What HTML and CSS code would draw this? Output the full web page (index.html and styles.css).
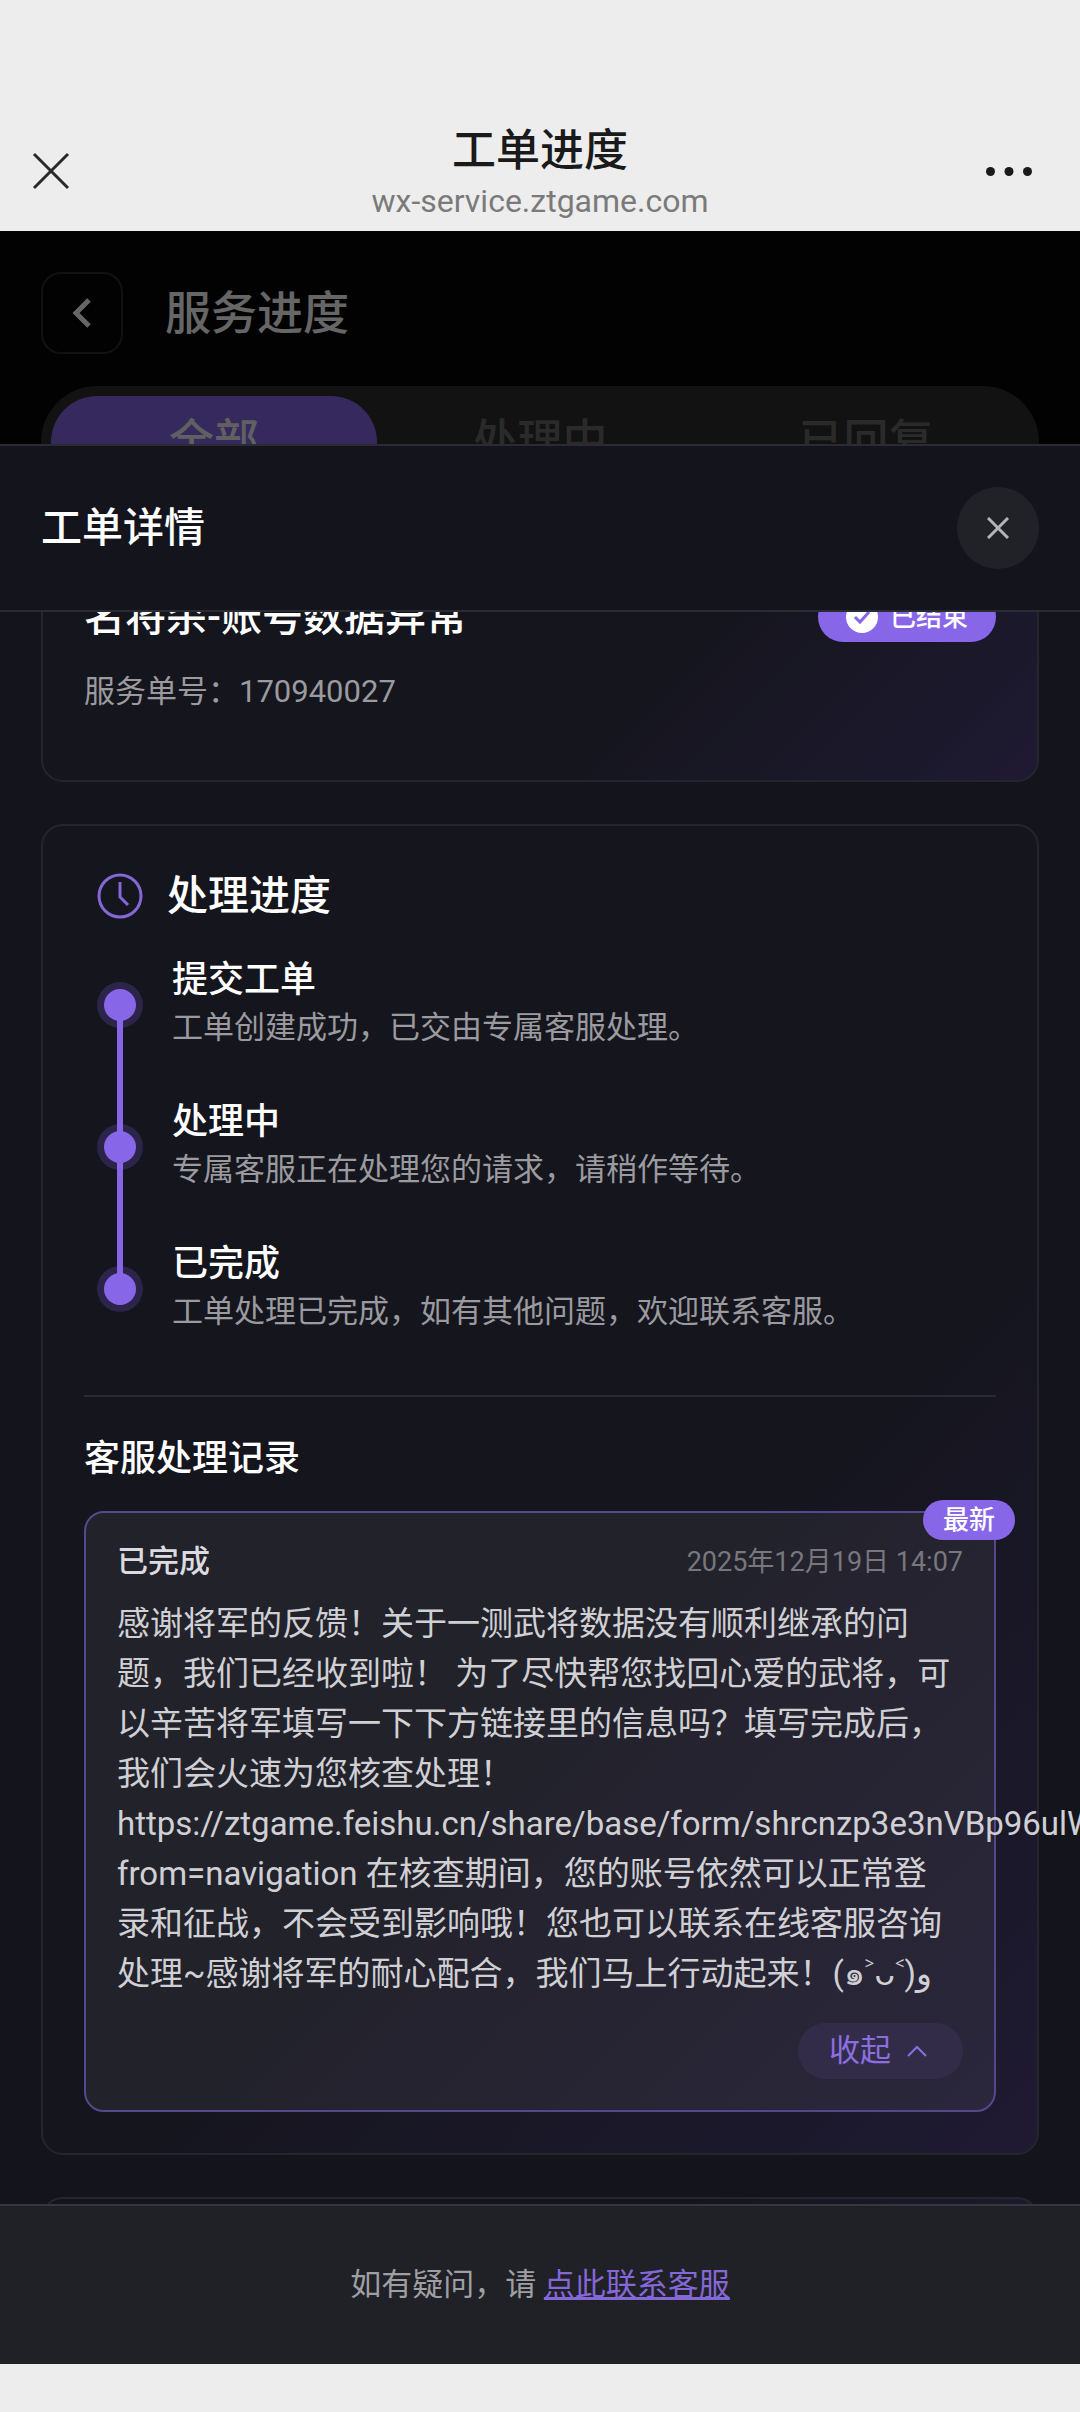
FILE: index.html
```html
<!DOCTYPE html>
<html lang="zh-CN">
<head>
    <meta charset="UTF-8">
    <meta name="viewport" content="width=device-width, initial-scale=1.0">
    <title>工单进度</title>
    <link rel="stylesheet" href="styles.css">
</head>
<body>
    <header class="nav-bar">
        <button class="nav-btn" type="button" aria-label="关闭">
            <svg width="38" height="38" viewBox="0 0 38 38"><path d="M2 2L36 36M36 2L2 36"/></svg>
        </button>
        <div class="nav-title">
            <h1>工单进度</h1>
            <p>wx-service.ztgame.com</p>
        </div>
        <button class="nav-btn nav-more" type="button" aria-label="更多">
            <svg width="46" height="9" viewBox="0 0 46 9"><circle cx="4.5" cy="4.5" r="4.5"/><circle cx="23" cy="4.5" r="4.5"/><circle cx="41.5" cy="4.5" r="4.5"/></svg>
        </button>
    </header>

    <main class="stage">
        <div class="page">
            <div class="page-head">
                <button class="back-btn" type="button" aria-label="返回">
                    <svg width="20" height="32" viewBox="0 0 20 32"><path d="M17 3L4 16L17 29"/></svg>
                </button>
                <h2>服务进度</h2>
            </div>
            <div class="tabs">
                <button class="tab active" type="button">全部</button>
                <button class="tab" type="button">处理中</button>
                <button class="tab" type="button">已回复</button>
            </div>
        </div>
        <div class="mask"></div>

        <section class="sheet">
            <div class="sheet-head">
                <h2>工单详情</h2>
                <button class="close-btn" type="button" aria-label="关闭详情">
                    <svg width="22" height="22" viewBox="0 0 22 22"><path d="M1 1L21 21M21 1L1 21"/></svg>
                </button>
            </div>

            <div class="sheet-body">
                <div class="sheet-list">
                    <div class="card">
                        <div class="ticket-head">
                            <h3>名将杀-账号数据异常</h3>
                            <span class="status">
                                <svg width="32" height="32" viewBox="0 0 32 32"><circle cx="16" cy="16" r="16"/><path d="M9 16L14 21L23 11"/></svg>
                                已结束
                            </span>
                        </div>
                        <p class="ticket-no">服务单号：170940027</p>
                    </div>

                    <div class="card">
                        <div class="progress-head">
                            <svg width="46" height="46" viewBox="0 0 46 46"><circle cx="23" cy="23" r="21"/><path d="M23 9V24L31 32"/></svg>
                            <h3>处理进度</h3>
                        </div>
                        <ol class="steps">
                            <li class="step">
                                <h4>提交工单</h4>
                                <p>工单创建成功，已交由专属客服处理。</p>
                            </li>
                            <li class="step">
                                <h4>处理中</h4>
                                <p>专属客服正在处理您的请求，请稍作等待。</p>
                            </li>
                            <li class="step">
                                <h4>已完成</h4>
                                <p>工单处理已完成，如有其他问题，欢迎联系客服。</p>
                            </li>
                        </ol>

                        <div class="records">
                            <h4>客服处理记录</h4>
                            <div class="record">
                                <span class="new-tag">最新</span>
                                <div class="record-head">
                                    <span class="record-status">已完成</span>
                                    <time>2025年12月19日 14:07</time>
                                </div>
                                <p class="record-text">感谢将军的反馈！关于一测武将数据没有顺利继承的问题，我们已经收到啦！ 为了尽快帮您找回心爱的武将，可以辛苦将军填写一下下方链接里的信息吗？填写完成后，我们会火速为您核查处理！https://ztgame.feishu.cn/share/base/form/shrcnzp3e3nVBp96ulW?from=navigation 在核查期间，您的账号依然可以正常登录和征战，不会受到影响哦！您也可以联系在线客服咨询处理~感谢将军的耐心配合，我们马上行动起来！(๑˃ᴗ˂)ﻭ</p>
                                <button class="fold-btn" type="button">
                                    收起
                                    <svg width="20" height="12" viewBox="0 0 20 12"><path d="M1 11L10 2L19 11"/></svg>
                                </button>
                            </div>
                        </div>
                    </div>

                    <div class="card"></div>
                </div>
            </div>

            <footer class="sheet-foot">如有疑问，请 <a href="#">点此联系客服</a></footer>
        </section>
    </main>
</body>
</html>
```
FILE: styles.css
```css
* {
    margin: 0;
    padding: 0;
    box-sizing: border-box;
}

body {
    display: flex;
    flex-direction: column;
    height: 100vh;
    padding-bottom: 48px;
    background-color: #ededed;
    font-family: Roboto, "Noto Sans", "Noto Sans CJK SC", sans-serif;
    font-size: 31px;
    line-height: 46px;
}

button {
    border: none;
    background: none;
    font-family: inherit;
    font-size: inherit;
    line-height: inherit;
    cursor: pointer;
}

svg {
    display: block;
    flex: none;
    fill: none;
    stroke: currentColor;
}

h1, h2, h3, h4 {
    font-weight: 500;
}

/* browser bar */
.nav-bar {
    display: flex;
    justify-content: space-between;
    align-items: center;
    padding: 121px 32px 10px;
    color: #1a1a1a;
}

.nav-btn {
    display: flex;
    width: 66px;
    color: #2a2a2a;
    stroke-width: 3;
}

.nav-more {
    justify-content: flex-end;
    padding-right: 16px;
}

.nav-more svg {
    fill: #1a1a1a;
    stroke: none;
}

.nav-title {
    text-align: center;
}

.nav-title h1 {
    font-size: 44px;
    line-height: 60px;
}

.nav-title p {
    line-height: 40px;
    color: #7a7a7a;
    font-size: 32px;
}

/* page under the sheet */
.stage {
    position: relative;
    flex: 1;
    overflow: hidden;
    background-color: #050506;
}

.page {
    padding: 41px;
}

.page-head {
    display: flex;
    align-items: center;
    gap: 42px;
    margin-bottom: 32px;
    color: #fff;
}

.page-head h2 {
    font-size: 46px;
    line-height: 60px;
}

.back-btn {
    display: flex;
    align-items: center;
    justify-content: center;
    width: 82px;
    height: 82px;
    border: 2px solid #2b2b2b;
    border-radius: 20px;
    color: #fff;
    stroke-width: 5;
}

.tabs {
    display: flex;
    padding: 10px;
    border-radius: 56px;
    background-color: #2d2d2d;
}

.tab {
    flex: 1;
    height: 92px;
    border-radius: 46px;
    color: #6a6a6a;
    font-size: 45px;
    font-weight: 500;
}

.tab.active {
    background-color: #8766e8;
    color: #f0f0f0;
}

.mask {
    position: absolute;
    inset: 0;
    background-color: rgba(0, 0, 0, 0.6);
}

/* bottom sheet */
.sheet {
    position: absolute;
    left: 0;
    right: 0;
    bottom: 0;
    display: flex;
    flex-direction: column;
    height: 90%;
    border-top: 2px solid #2b2b33;
    background-color: #14141c;
    color: #fff;
}

.sheet-head {
    display: flex;
    justify-content: space-between;
    align-items: center;
    padding: 41px;
    border-bottom: 2px solid #2b2b33;
}

.sheet-head h2,
.card h3 {
    font-size: 41px;
    line-height: 58px;
}

.close-btn {
    display: flex;
    align-items: center;
    justify-content: center;
    width: 82px;
    height: 82px;
    border-radius: 50%;
    background-color: #212128;
    color: #b5b5b9;
    stroke-width: 3;
}

.sheet-body {
    flex: 1;
    min-height: 0;
    overflow: hidden;
}

/* list is scrolled a little past its start */
.sheet-list {
    display: flex;
    flex-direction: column;
    gap: 42px;
    margin-top: -67px;
    padding: 0 41px;
}

.card {
    padding: 41px;
    border: 2px solid #25252e;
    border-radius: 22px;
    background: linear-gradient(135deg, #15151e 60%, #1f1a32);
}

.ticket-head {
    display: flex;
    justify-content: space-between;
    align-items: center;
    margin-bottom: 23px;
}

.status {
    display: flex;
    align-items: center;
    gap: 12px;
    height: 50px;
    padding: 0 28px;
    border-radius: 25px;
    background-color: #8766e8;
    font-size: 26px;
    font-weight: 500;
}

.status svg {
    fill: #fff;
    stroke: none;
}

.status path {
    fill: none;
    stroke: #8766e8;
    stroke-width: 3;
}

.ticket-no {
    margin-bottom: 24px;
    color: #9a9a9f;
}

.progress-head {
    display: flex;
    align-items: center;
    gap: 24px;
    margin-bottom: 30px;
    padding-left: 13px;
}

.progress-head svg {
    color: #8468d8;
    stroke-width: 3;
}

.card h4 {
    font-size: 36px;
    line-height: 50px;
}

.steps {
    list-style: none;
    padding-bottom: 14px;
    border-bottom: 2px solid #2a2a34;
}

.step {
    position: relative;
    padding: 0 0 46px 88px;
    color: #fff;
}

.step p {
    color: #9a9a9f;
}

/* dot with its halo */
.step::before {
    content: "";
    position: absolute;
    left: 20px;
    top: 34px;
    width: 32px;
    height: 32px;
    border-radius: 50%;
    background-color: #8766e8;
    box-shadow: 0 0 0 7px #2c2449;
}

/* line down to the next dot */
.step:not(:last-child)::after {
    content: "";
    position: absolute;
    left: 33px;
    top: 50px;
    z-index: 1;
    width: 6px;
    height: 100%;
    background-color: #8766e8;
}

.records {
    padding-top: 37px;
}

.records h4 {
    margin-bottom: 27px;
}

.record {
    position: relative;
    padding: 31px;
    border: 2px solid #56488c;
    border-radius: 20px;
    background-color: rgba(255, 255, 255, 0.06);
}

.new-tag {
    position: absolute;
    top: -13px;
    right: -21px;
    padding: 0 20px;
    border-radius: 20px;
    background-color: #8766e8;
    font-size: 26px;
    font-weight: 500;
    line-height: 40px;
}

.record-head {
    display: flex;
    justify-content: space-between;
    align-items: center;
    margin-bottom: 19px;
    line-height: 36px;
}

.record-status {
    color: #dcdce0;
    font-weight: 500;
}

.record-head time {
    color: #77777d;
    font-size: 27px;
}

.record-text {
    margin-bottom: 24px;
    padding-right: 8px;
    color: #d0d0d4;
    font-size: 33px;
    line-height: 50px;
}

.fold-btn {
    display: flex;
    align-items: center;
    gap: 16px;
    height: 56px;
    margin-left: auto;
    padding: 0 36px 0 31px;
    border-radius: 28px;
    background-color: #332c49;
    color: #8b6fe0;
    stroke-width: 2;
}

.sheet-foot {
    padding: 56px 41px;
    border-top: 2px solid #36363e;
    background-color: #202027;
    color: #9f9fa3;
    text-align: center;
}

.sheet-foot a {
    color: #8468d8;
    text-decoration-thickness: 3px;
}
```
